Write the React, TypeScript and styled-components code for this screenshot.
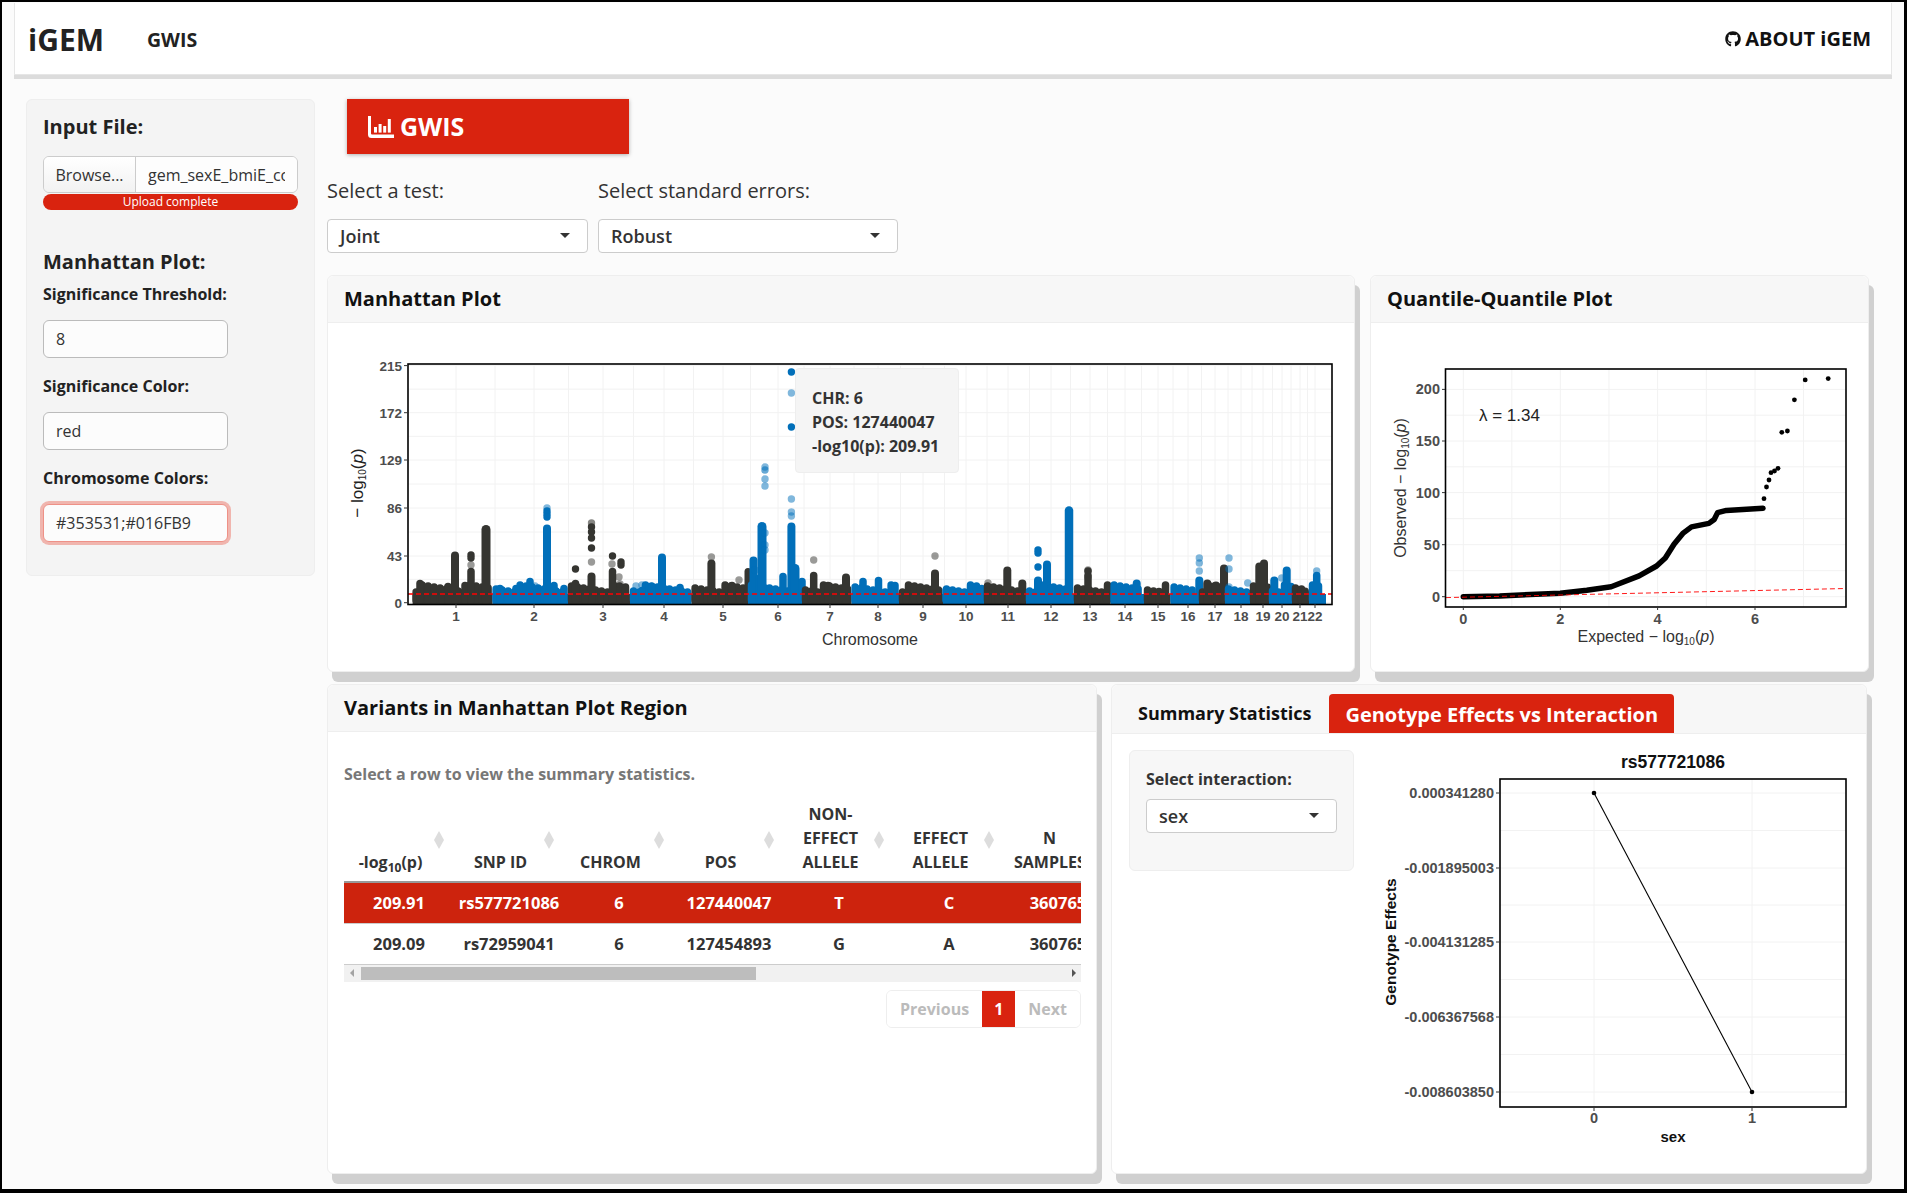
import { ReactNode } from 'react'
import styled, { createGlobalStyle } from 'styled-components'
import { FaGithub } from 'react-icons/fa'

const RED = '#d9230f'
const DARK = '#353531'
const BLUE = '#016FB9'

type Peak = [number, number, number?]
type Dot = [number, number, number?]
type Chrom = { name: string; tick: number; end: number; peaks: Peak[]; dots?: Dot[] }

// plot coordinates are page pixels, the svg viewBox takes care of the offset
const CHROMS: Chrom[] = [
  { name: '1', tick: 456, end: 492.6, peaks: [[420, 580], [442, 588], [448, 583], [455, 552, 8], [465, 582], [471, 568], [486, 526, 9]], dots: [[471, 555], [471, 558], [471, 565, 0.5]] },
  { name: '2', tick: 534, end: 568, peaks: [[500, 585], [516, 585], [530, 578], [547, 525, 8], [554, 582], [564, 585]], dots: [[547, 508, 0.5], [547, 511], [547, 514], [547, 517], [535, 586, 0.5]] },
  { name: '3', tick: 603, end: 630, peaks: [[575.5, 580], [591.5, 573, 8], [612.5, 568], [585, 590]], dots: [[575.5, 569], [591.5, 523, 0.6], [591.5, 527], [591.5, 532], [591.5, 538], [591.5, 548], [591.5, 562, 0.5], [612.5, 556], [621, 565], [621, 562], [612, 564, 0.5], [619, 577, 0.5], [620, 584, 0.5]] },
  { name: '4', tick: 664, end: 691.6, peaks: [[642, 587], [652, 583], [662, 554, 8], [680, 584], [671, 590]], dots: [[636, 586, 0.5], [642, 585, 0.5]] },
  { name: '5', tick: 723, end: 748, peaks: [[696, 588], [711.4, 560, 8], [722, 591], [732, 582], [740, 588], [748, 568, 7]], dots: [[739, 580, 0.5], [711.4, 557, 0.5]] },
  { name: '6', tick: 778, end: 802, peaks: [[753.5, 557, 8], [759, 575], [762, 523, 9], [783, 573], [791.4, 523, 8], [795, 565, 9], [802, 578]], dots: [[791.4, 372], [791.4, 393, 0.5], [791.4, 427], [791.4, 499, 0.5], [791.4, 512, 0.5], [791.4, 516, 0.5], [765, 467, 0.5], [765, 470, 0.6], [765, 479, 0.5], [765, 486, 0.5], [765, 533, 0.5], [765, 545, 0.5], [765, 550, 0.5], [755, 570, 0.5]] },
  { name: '7', tick: 830, end: 851.6, peaks: [[813.7, 572], [828, 582], [838.5, 588], [846, 574, 8]], dots: [[813.7, 560, 0.5]] },
  { name: '8', tick: 878, end: 899, peaks: [[863, 578], [878.5, 577], [887, 590], [895, 582]] },
  { name: '9', tick: 923, end: 943, peaks: [[906, 592], [935, 570, 8], [928, 592]], dots: [[935, 556, 0.5]] },
  { name: '10', tick: 966, end: 984, peaks: [[946, 587], [955.5, 590], [970, 589], [981.7, 585]] },
  { name: '11', tick: 1008, end: 1026, peaks: [[988, 588], [998, 591], [1007.3, 567, 8], [1022.3, 580, 8]], dots: [[988, 583, 0.5], [998, 589, 0.5]] },
  { name: '12', tick: 1051, end: 1074, peaks: [[1032.7, 590], [1038, 577, 8], [1047, 561, 8], [1050.7, 585], [1063, 589], [1069, 507, 8.5]], dots: [[1038, 550], [1038, 553], [1038, 567]] },
  { name: '13', tick: 1090, end: 1110.6, peaks: [[1078, 592], [1088, 572], [1096.7, 594], [1106.7, 592]], dots: [[1088, 571], [1088, 572, 0.5], [1088, 577, 0.5], [1088, 570, 0.5]] },
  { name: '14', tick: 1125, end: 1144, peaks: [[1126, 588], [1136.7, 580, 8]] },
  { name: '15', tick: 1158, end: 1170.6, peaks: [[1151.7, 589], [1159, 588], [1165, 591]] },
  { name: '16', tick: 1188, end: 1199, peaks: [[1175, 586], [1190, 590], [1199.3, 577, 8]], dots: [[1199.3, 558, 0.5], [1199.3, 563, 0.5], [1199.3, 571, 0.5]] },
  { name: '17', tick: 1215, end: 1225, peaks: [[1207.3, 580, 8], [1216, 582, 8], [1224, 565, 8]] },
  { name: '18', tick: 1241, end: 1250, peaks: [[1235, 590], [1243, 592], [1247.7, 590]], dots: [[1229, 558, 0.5], [1229, 569, 0.5], [1229, 587, 0.5], [1247.7, 583, 0.5]] },
  { name: '19', tick: 1263, end: 1269, peaks: [[1259.3, 563, 8], [1264, 560, 8], [1268, 583, 6]] },
  { name: '20', tick: 1282, end: 1292, peaks: [[1274.3, 577, 8], [1286.7, 567, 8], [1291, 583]], dots: [[1281.7, 578, 0.5]] },
  { name: '21', tick: 1300, end: 1309, peaks: [[1305, 588, 8]] },
  { name: '22', tick: 1315, end: 1326, peaks: [[1316.7, 572, 7.5]], dots: [[1316.7, 571, 0.5]] },
]

const QQ_LINE = '1463.3,596.7 1499.6,595.9 1560.3,593.2 1586.8,590.2 1611.2,586.7 1639.1,575.9 1656.6,566 1665.3,558 1674,544.2 1682.8,533.4 1691.5,526.9 1708.9,523.4 1714.2,519.5 1717.6,512.6 1726.4,510.4 1763,508.2'
const QQ_POINTS = [[1764, 498.7], [1766.5, 487], [1769, 480], [1771, 472.7], [1774.5, 471], [1778, 468.3], [1781.8, 432.3], [1787.4, 431], [1794.4, 399.8], [1805.2, 379.9], [1828.2, 378.6]]

const COLUMNS = [
  { key: 'log', width: 110 },
  { key: 'snp', label: 'SNP ID', width: 110 },
  { key: 'chrom', label: 'CHROM', width: 110 },
  { key: 'pos', label: 'POS', width: 110 },
  { key: 'nea', label: 'NON-EFFECT ALLELE', width: 110 },
  { key: 'ea', label: 'EFFECT ALLELE', width: 110 },
  { key: 'n', label: 'N SAMPLES', width: 108 },
]

const ROWS = [
  ['209.91', 'rs577721086', '6', '127440047', 'T', 'C', '360765'],
  ['209.09', 'rs72959041', '6', '127454893', 'G', 'A', '360765'],
]

const GlobalStyle = createGlobalStyle`
  html, body {
    margin: 0;
    background: #000;
  }
  body {
    font-family: "Open Sans", "Liberation Sans", sans-serif;
    font-size: 16px;
    color: #333;
  }
  * {
    box-sizing: border-box;
  }
`

const LogLabel = ({ children }: { children?: ReactNode }) => (
  <>
    {children}
    <tspan>{'\u2212 '}log</tspan>
    <tspan dy={3} fontSize="10">10</tspan>
    <tspan dy={-3}>(</tspan>
    <tspan fontStyle="italic">p</tspan>
    <tspan>)</tspan>
  </>
)

const midpoints = (ticks: number[]) => ticks.slice(1).map((t, i) => (t + ticks[i]) / 2)

const ManhattanChart = () => {
  const yTicks = [[0, 602.7], [43, 556], [86, 508], [129, 460], [172, 412.7], [215, 365.6]]
  const xTicks = CHROMS.map((c) => c.tick)
  const yValues = yTicks.map((t) => t[1])
  return (
    <PlotSvg viewBox="327 323 1028 346" width={1028} height={346}>
      <g stroke="#f2f2f2">
        {[...yValues, ...midpoints(yValues)].map((y) => <line key={y} x1={408} x2={1332} y1={y} y2={y} />)}
        {[...xTicks, ...midpoints(xTicks)].map((x) => <line key={x} x1={x} x2={x} y1={364} y2={604} />)}
      </g>
      {CHROMS.map((c, i) => {
        const start = i === 0 ? 412.6 : CHROMS[i - 1].end
        const color = i % 2 === 0 ? DARK : BLUE
        const bumps = []
        for (let x = start + 3.5, n = 0; x < c.end - 3; x += 6, n++) {
          bumps.push(<line key={x} x1={x} x2={x} y1={600} y2={592 - ((n * 7 + i * 3) % 8)} />)
        }
        return (
          <g key={c.name} stroke={color} strokeLinecap="round" strokeWidth={7.5}>
            <rect x={start} y={594} width={c.end - start} height={10} fill={color} stroke="none" />
            {bumps}
            {c.peaks.map(([x, top, w]) => (
              <line key={`${x}-${top}`} x1={x} x2={x} y1={600} y2={top + 3.5} strokeWidth={w ?? 7.5} />
            ))}
            {c.dots?.map(([x, y, o]) => (
              <circle key={`${x}-${y}`} cx={x} cy={y} r={3.7} fill={color} stroke="none" opacity={o ?? 1} />
            ))}
          </g>
        )
      })}
      <line x1={408} x2={1332} y1={594} y2={594} stroke="#f00" strokeWidth={1.3} strokeDasharray="5 3" />
      <rect x={408} y={364} width={924} height={240.5} fill="none" stroke="#000" strokeWidth={1.6} />
      <g stroke="#333">
        {yTicks.map(([v, y]) => <line key={v} x1={404} x2={408} y1={y} y2={y} />)}
        {xTicks.map((x) => <line key={x} x1={x} x2={x} y1={604} y2={608} />)}
      </g>
      <g fontFamily="Liberation Sans" fontSize="13.5" fontWeight="700" fill="#4d4d4d">
        {yTicks.map(([v, y]) => <text key={v} x={402} y={y + 5} textAnchor="end">{v}</text>)}
        {CHROMS.map((c) => <text key={c.name} x={c.tick} y={621} textAnchor="middle">{c.name}</text>)}
      </g>
      <text x={870} y={645} textAnchor="middle" fontFamily="Liberation Sans" fontSize="16" fill="#333">Chromosome</text>
      <text transform="rotate(-90 363 483)" x={363} y={483} textAnchor="middle" fontFamily="Liberation Sans" fontSize="17" fill="#222">
        <LogLabel />
      </text>
    </PlotSvg>
  )
}

const QQChart = () => {
  const xTicks = [[0, 1463.3], [2, 1560.3], [4, 1657.6], [6, 1755]]
  const yTicks = [[0, 596.7], [50, 544.7], [100, 492.6], [150, 441], [200, 389.4]]
  const xs = xTicks.map((t) => t[1])
  const ys = yTicks.map((t) => t[1])
  return (
    <PlotSvg viewBox="1370 323 498 348" width={498} height={348}>
      <g stroke="#f2f2f2">
        {[...ys, ...midpoints(ys)].map((y) => <line key={y} x1={1446} x2={1846} y1={y} y2={y} />)}
        {[...xs, ...midpoints(xs), 1803.5].map((x) => <line key={x} x1={x} x2={x} y1={369} y2={607} />)}
      </g>
      <polyline points={QQ_LINE} fill="none" stroke="#000" strokeWidth={5.5} strokeLinecap="round" strokeLinejoin="round" />
      {QQ_POINTS.map(([x, y]) => <circle key={x} cx={x} cy={y} r={2.4} fill="#000" />)}
      <line x1={1446} x2={1846} y1={597.6} y2={588.5} stroke="#f00" strokeWidth={0.9} strokeDasharray="5 3" />
      <rect x={1445.5} y={369} width={400.5} height={238} fill="none" stroke="#000" strokeWidth={1.6} />
      <g stroke="#333">
        {yTicks.map(([v, y]) => <line key={v} x1={1442} x2={1445} y1={y} y2={y} />)}
        {xTicks.map(([v, x]) => <line key={v} x1={x} x2={x} y1={607} y2={610} />)}
      </g>
      <g fontFamily="Liberation Sans" fontSize="14.5" fontWeight="700" fill="#4d4d4d">
        {yTicks.map(([v, y]) => <text key={v} x={1440} y={y + 5} textAnchor="end">{v}</text>)}
        {xTicks.map(([v, x]) => <text key={v} x={x} y={624} textAnchor="middle">{v}</text>)}
      </g>
      <text x={1479} y={421} fontFamily="Liberation Sans" fontSize="17" fill="#222">λ = 1.34</text>
      <text x={1646} y={642} textAnchor="middle" fontFamily="Liberation Sans" fontSize="16" fill="#333">
        Expected <LogLabel />
      </text>
      <text transform="rotate(-90 1406 488)" x={1406} y={488} textAnchor="middle" fontFamily="Liberation Sans" fontSize="16" fill="#333">
        Observed <LogLabel />
      </text>
    </PlotSvg>
  )
}

const GenotypeChart = () => {
  const yTicks = [['0.000341280', 793], ['-0.001895003', 868], ['-0.004131285', 942], ['-0.006367568', 1017], ['-0.008603850', 1092]] as const
  const ys = yTicks.map((t) => t[1] as number)
  return (
    <PlotSvg viewBox="1362 750 498 410" width={498} height={410}>
      <g stroke="#f2f2f2">
        {[...ys, ...midpoints(ys)].map((y) => <line key={y} x1={1499} x2={1845} y1={y} y2={y} />)}
        {[1593, 1751].map((x) => <line key={x} x1={x} x2={x} y1={779} y2={1107} />)}
      </g>
      <line x1={1593} y1={793} x2={1751} y2={1092} stroke="#000" strokeWidth={1.1} />
      <circle cx={1593} cy={793} r={2.3} fill="#000" />
      <circle cx={1751} cy={1092} r={2.3} fill="#000" />
      <rect x={1499} y={779} width={346} height={328} fill="none" stroke="#000" strokeWidth={1.6} />
      <g stroke="#333">
        {ys.map((y) => <line key={y} x1={1495} x2={1499} y1={y} y2={y} />)}
        {[1593, 1751].map((x) => <line key={x} x1={x} x2={x} y1={1107} y2={1111} />)}
      </g>
      <text x={1672} y={768} textAnchor="middle" fontFamily="Liberation Sans" fontSize="17.5" fontWeight="700" fill="#111">rs577721086</text>
      <g fontFamily="Liberation Sans" fontSize="14.5" fontWeight="700" fill="#4d4d4d">
        {yTicks.map(([label, y]) => <text key={label} x={1493} y={y + 5} textAnchor="end">{label}</text>)}
        <text x={1593} y={1123} textAnchor="middle">0</text>
        <text x={1751} y={1123} textAnchor="middle">1</text>
      </g>
      <text x={1672} y={1142} textAnchor="middle" fontFamily="Liberation Sans" fontSize="15" fontWeight="700" fill="#111">sex</text>
      <text transform="rotate(-90 1395 942)" x={1395} y={942} textAnchor="middle" fontFamily="Liberation Sans" fontSize="15.5" fontWeight="700" fill="#111">Genotype Effects</text>
    </PlotSvg>
  )
}

const BarIcon = () => (
  <svg width="26" height="23" viewBox="0 0 26 23" fill="#fff">
    <path d="M0 1h3v17.6a1 1 0 0 0 1 1h22V23H3.5A3.5 3.5 0 0 1 0 19.5z" />
    <rect x="6" y="12" width="3" height="5.6" />
    <rect x="10.6" y="9" width="3" height="8.6" />
    <rect x="15.2" y="11" width="3" height="6.6" />
    <rect x="19.8" y="4" width="3" height="13.6" />
  </svg>
)

const App = () => (
  <Frame>
    <GlobalStyle />
    <Navbar>
      <Brand>iGEM</Brand>
      <NavLink>GWIS</NavLink>
      <AboutLink><FaGithub size={16} />ABOUT iGEM</AboutLink>
    </Navbar>
    <Content>
      <Sidebar>
        <SideHeading>Input File:</SideHeading>
        <FileRow>
          <BrowseButton>Browse...</BrowseButton>
          <FileName><span>gem_sexE_bmiE_cov_results.out</span></FileName>
        </FileRow>
        <Progress>Upload complete</Progress>
        <SideHeading $spaced>Manhattan Plot:</SideHeading>
        <FieldLabel>Significance Threshold:</FieldLabel>
        <TextInput>8</TextInput>
        <FieldLabel>Significance Color:</FieldLabel>
        <TextInput>red</TextInput>
        <FieldLabel>Chromosome Colors:</FieldLabel>
        <TextInput $focused>#353531;#016FB9</TextInput>
      </Sidebar>
      <Main>
        <Banner><BarIcon /><BannerTitle>GWIS</BannerTitle></Banner>
        <Filters>
          <Filter $width={261}>
            <FilterLabel>Select a test:</FilterLabel>
            <Select>Joint</Select>
          </Filter>
          <Filter $width={300}>
            <FilterLabel>Select standard errors:</FilterLabel>
            <Select>Robust</Select>
          </Filter>
        </Filters>
        <TopRow>
          <Card>
            <CardHeader>Manhattan Plot</CardHeader>
            <CardBody>
              <ManhattanChart />
              <Tooltip>
                <div>CHR: 6</div>
                <div>POS: 127440047</div>
                <div>-log10(p): 209.91</div>
              </Tooltip>
            </CardBody>
          </Card>
          <Card>
            <CardHeader>Quantile-Quantile Plot</CardHeader>
            <CardBody>
              <QQChart />
            </CardBody>
          </Card>
        </TopRow>
        <BottomRow>
          <Card>
            <CardHeader>Variants in Manhattan Plot Region</CardHeader>
            <VariantsBody>
              <Hint>Select a row to view the summary statistics.</Hint>
              <TableWrap>
                <Table>
                  <colgroup>
                    {COLUMNS.map((c) => <col key={c.key} width={c.width} />)}
                  </colgroup>
                  <thead>
                    <tr>
                      {COLUMNS.map((c) => (
                        <Th key={c.key}>
                          {c.label ?? <>-log<sub>10</sub>(p)</>}
                          <SortMark />
                        </Th>
                      ))}
                    </tr>
                  </thead>
                  <tbody>
                    {ROWS.map((row, i) => (
                      <Row key={row[1]} $selected={i === 0}>
                        {row.map((value, j) => <Td key={COLUMNS[j].key}>{value}</Td>)}
                      </Row>
                    ))}
                  </tbody>
                </Table>
              </TableWrap>
              <ScrollBar>
                <ScrollArrow $dir="left" />
                <ScrollThumb />
                <ScrollArrow $dir="right" />
              </ScrollBar>
              <Pagination>
                <PageItem>Previous</PageItem>
                <PageItem $active>1</PageItem>
                <PageItem>Next</PageItem>
              </Pagination>
            </VariantsBody>
          </Card>
          <Card>
            <TabBar>
              <Tab>Summary Statistics</Tab>
              <Tab $active>Genotype Effects vs Interaction</Tab>
            </TabBar>
            <TabBody>
              <InteractionPanel>
                <InteractionLabel>Select interaction:</InteractionLabel>
                <Select>sex</Select>
              </InteractionPanel>
              <GenotypeChart />
            </TabBody>
          </Card>
        </BottomRow>
      </Main>
    </Content>
  </Frame>
)

export default App

const Frame = styled.div`
  height: 1193px;
  overflow: hidden;
  border-style: solid;
  border-color: #000;
  border-width: 2px 3px 4px 2px;
  background: #fbfbfb;
`

const Navbar = styled.nav`
  display: flex;
  align-items: center;
  height: 72px;
  margin: 1px 12px 0;
  padding: 2px 20px 0 13px;
  background: #fff;
  border: 1px solid #e6e6e6;
  border-top: none;
  box-shadow: 0 4px 0 #dcdcdc;
`

const Brand = styled.div`
  font-size: 30px;
  font-weight: 700;
  color: #222;
`

const NavLink = styled.div`
  margin-left: 43px;
  font-size: 19.5px;
  font-weight: 700;
  color: #222;
`

const AboutLink = styled.div`
  display: flex;
  align-items: center;
  gap: 4px;
  margin: 0 0 2px auto;
  font-size: 20px;
  font-weight: 700;
  color: #111;
`

const Content = styled.div`
  display: grid;
  grid-template-columns: 289px 1fr;
  column-gap: 12px;
  align-items: start;
  padding: 24px 0 0 24px;
`

const Sidebar = styled.aside`
  padding: 13px 16px 33px;
  background: #f4f4f4;
  border: 1px solid #eee;
  border-radius: 6px;
`

const SideHeading = styled.h3<{ $spaced?: boolean }>`
  margin: ${(p) => (p.$spaced ? '38px' : '0')} 0 0;
  font-size: 20px;
  line-height: 28px;
  font-weight: 700;
  color: #222;
`

const FileRow = styled.div`
  display: flex;
  height: 37px;
  margin-top: 15px;
  border: 1px solid #ccc;
  border-radius: 6px;
  overflow: hidden;
`

const BrowseButton = styled.div`
  display: flex;
  align-items: center;
  justify-content: center;
  width: 92px;
  flex: none;
  background: linear-gradient(#fff, #f2f2f2);
  border-right: 1px solid #ccc;
`

const FileName = styled.div`
  flex: 1;
  min-width: 0;
  display: flex;
  align-items: center;
  padding: 0 12px;
  background: #fdfdfd;
  span {
    overflow: hidden;
    white-space: nowrap;
  }
`

const Progress = styled.div`
  height: 16px;
  margin-top: 1px;
  background: ${RED};
  border-radius: 8px;
  color: #fff;
  font-size: 12px;
  line-height: 16px;
  text-align: center;
`

const FieldLabel = styled.label`
  display: block;
  margin: 17px 0 15px;
  font-size: 16px;
  line-height: 22px;
  font-weight: 700;
  color: #222;
  h3 + & {
    margin-top: 7px;
  }
`

const TextInput = styled.div<{ $focused?: boolean }>`
  width: 185px;
  height: 38px;
  padding: 0 12px;
  line-height: 36px;
  background: #fcfcfc;
  border: 1px solid ${(p) => (p.$focused ? '#ee9187' : '#bbb')};
  border-radius: 6px;
  box-shadow: ${(p) => (p.$focused ? '0 0 0 3px #f0b5ae' : 'none')};
`

const Main = styled.main`
  min-width: 0;
`

const Banner = styled.div`
  display: flex;
  align-items: center;
  gap: 6px;
  width: 282px;
  height: 55px;
  margin-left: 20px;
  padding-left: 21px;
  background: ${RED};
  color: #fff;
  font-size: 25px;
  font-weight: 700;
  box-shadow: 0 1px 4px rgba(0, 0, 0, 0.3);
`

const BannerTitle = styled.span`
  margin-bottom: 2px;
`

const Filters = styled.div`
  display: flex;
  gap: 10px;
  margin-top: 25px;
`

const Filter = styled.div<{ $width: number }>`
  width: ${(p) => p.$width}px;
`

const FilterLabel = styled.div`
  font-size: 20px;
  line-height: 24px;
  margin-bottom: 16px;
  color: #333;
`

const Select = styled.div`
  position: relative;
  height: 34px;
  padding: 0 12px;
  line-height: 33px;
  font-size: 18px;
  font-weight: 600;
  color: #333;
  background: #fff;
  border: 1px solid #ccc;
  border-radius: 4px;
  &::after {
    content: '';
    position: absolute;
    right: 17px;
    top: 13px;
    border-style: solid;
    border-width: 5px 5px 0;
    border-color: #333 transparent transparent;
  }
`

const TopRow = styled.div`
  display: grid;
  grid-template-columns: 1028px 498.5px;
  column-gap: 15px;
  height: 394px;
  margin-top: 22px;
`

const BottomRow = styled.div`
  display: grid;
  grid-template-columns: 770px 756px;
  column-gap: 14px;
  height: 490px;
  margin-top: 15px;
`

const Card = styled.section`
  display: flex;
  flex-direction: column;
  min-width: 0;
  background: #fff;
  border: 1px solid #eee;
  border-radius: 6px;
  box-shadow: 5px 10px 0 #d0d0d0;
`

const CardHeader = styled.header`
  height: 47px;
  flex: none;
  padding: 0 16px;
  font-size: 20px;
  line-height: 46px;
  font-weight: 700;
  color: #111;
  background: #f7f7f7;
  border-bottom: 1px solid #eee;
  border-radius: 6px 6px 0 0;
`

const CardBody = styled.div`
  position: relative;
  flex: 1;
  margin: 0 -1px;
`

const PlotSvg = styled.svg`
  display: block;
  flex: none;
`

const Tooltip = styled.div`
  position: absolute;
  left: 468px;
  top: 45px;
  width: 164px;
  height: 105px;
  padding: 17px 16px;
  background: #f5f5f5;
  border: 1px solid #eee;
  border-radius: 4px;
  font-size: 16px;
  line-height: 24px;
  font-weight: 700;
  color: #333;
`

const VariantsBody = styled.div`
  flex: 1;
  padding: 30px 16px 0;
`

const Hint = styled.p`
  margin: 0 0 16px;
  font-size: 16px;
  line-height: 24px;
  font-weight: 700;
  color: #777;
`

const TableWrap = styled.div`
  width: 737px;
  overflow: hidden;
`

const Table = styled.table`
  width: 768px;
  table-layout: fixed;
  border-collapse: collapse;
`

const Th = styled.th`
  position: relative;
  height: 79px;
  padding: 0 27px 7px 10px;
  vertical-align: bottom;
  text-align: center;
  font-size: 16px;
  line-height: 24px;
  font-weight: 700;
  color: #333;
  border-bottom: 2px solid #999;
  sub {
    font-size: 12px;
    line-height: 0;
  }
`

const SortMark = styled.span`
  position: absolute;
  right: 10px;
  top: 29px;
  width: 10px;
  height: 18px;
  background: #ddd;
  clip-path: polygon(50% 0, 100% 50%, 50% 100%, 0 50%);
`

const Row = styled.tr<{ $selected?: boolean }>`
  height: 41px;
  background: ${(p) => (p.$selected ? '#cd230d' : 'transparent')};
  color: ${(p) => (p.$selected ? '#fff' : '#333')};
  border-bottom: 1px solid #ccc;
`

const Td = styled.td`
  padding: 0;
  text-align: center;
  font-size: 16.5px;
  font-weight: 700;
  white-space: nowrap;
`

const ScrollBar = styled.div`
  display: flex;
  align-items: center;
  width: 737px;
  height: 17px;
  padding: 0 3px;
  background: #f1f1f1;
`

const ScrollArrow = styled.span<{ $dir: 'left' | 'right' }>`
  flex: none;
  border-style: solid;
  border-width: 4px 0 4px 4px;
  border-color: transparent transparent transparent #555;
  transform: ${(p) => (p.$dir === 'left' ? 'rotate(180deg)' : 'none')};
  opacity: ${(p) => (p.$dir === 'left' ? 0.5 : 1)};
  margin-left: ${(p) => (p.$dir === 'right' ? 'auto' : '3px')};
  margin-right: ${(p) => (p.$dir === 'right' ? '2px' : '0')};
`

const ScrollThumb = styled.span`
  width: 395px;
  height: 13px;
  margin-left: 7px;
  background: #bdbdbd;
`

const Pagination = styled.div`
  display: flex;
  width: max-content;
  height: 38px;
  margin: 8px 0 0 542px;
  border: 1px solid #eee;
  border-radius: 6px;
  overflow: hidden;
`

const PageItem = styled.div<{ $active?: boolean }>`
  padding: 0 ${(p) => (p.$active ? '12px' : '13px')};
  line-height: 37px;
  font-size: 16px;
  font-weight: 700;
  background: ${(p) => (p.$active ? RED : '#fff')};
  color: ${(p) => (p.$active ? '#fff' : '#bbb')};
`

const TabBar = styled.div`
  display: flex;
  align-items: flex-end;
  height: 49px;
  flex: none;
  padding-left: 17px;
  background: #f7f7f7;
  border-bottom: 1px solid #eee;
  border-radius: 6px 6px 0 0;
`

const Tab = styled.div<{ $active?: boolean }>`
  height: ${(p) => (p.$active ? '39px' : '38px')};
  padding: 0 ${(p) => (p.$active ? '16px' : '18px 0 9px')};
  font-size: ${(p) => (p.$active ? '20px' : '18px')};
  line-height: ${(p) => (p.$active ? '41px' : '36px')};
  font-weight: 700;
  color: ${(p) => (p.$active ? '#fff' : '#111')};
  background: ${(p) => (p.$active ? RED : 'transparent')};
  border-radius: 4px 4px 0 0;
`

const TabBody = styled.div`
  display: flex;
  align-items: flex-start;
  gap: 9px;
  padding: 16px 0 0 17px;
`

const InteractionPanel = styled.div`
  flex: none;
  width: 225px;
  height: 121px;
  padding: 17px 16px;
  background: #f7f7f7;
  border: 1px solid #eee;
  border-radius: 6px;
`

const InteractionLabel = styled.div`
  font-size: 16px;
  line-height: 22px;
  font-weight: 700;
  color: #333;
  margin-bottom: 9px;
`
